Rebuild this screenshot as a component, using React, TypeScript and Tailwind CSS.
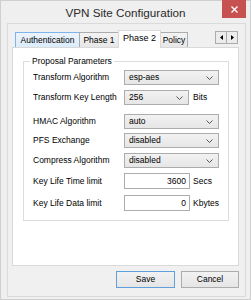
import React from 'react';

const Chevron = () => (
    <svg width="7" height="4" viewBox="0 0 7 4" className="mr-[5px] shrink-0">
        <path d="M0.5 0.5 L3.5 3.5 L6.5 0.5" fill="none" stroke="#555" strokeWidth="1" />
    </svg>
);

const Select = ({ value, width }: { value: string; width: string }) => (
    <div className={`${width} h-[15px] flex items-center justify-between border border-[#acacac] bg-gradient-to-b from-[#f2f2f2] to-[#e6e6e6]`}>
        <span className="pl-[4px] leading-none">{value}</span>
        <Chevron />
    </div>
);

const Row = ({ label, children, className }: { label: string; children: React.ReactNode; className: string }) => (
    <div className={`flex items-center ${className}`}>
        <span className="w-[91px] shrink-0 leading-none">{label}</span>
        {children}
    </div>
);

const Tab = ({ label, width, active }: { label: string; width: string; active?: boolean }) => {
    if (active) {
        return (
            <div className={`${width} h-[18px] -mb-px -ml-px relative z-10 border border-b-0 border-[#d9d9d9] bg-white flex items-start justify-center pt-[3px]`}>
                <span className="leading-none text-[9px]">{label}</span>
            </div>
        );
    }
    return (
        <div className={`${width} h-[15px] -ml-px border border-b-0 border-[#acacac] bg-gradient-to-b from-[#f3f3f3] to-[#e7e7e7] flex items-center justify-center`}>
            <span className="leading-none">{label}</span>
        </div>
    );
};

export default function App() {
    return (
        <div className="w-[251px] h-[300px] border border-[#cfcfcf] bg-[#efefef] flex flex-col text-[8.5px] text-black font-['Liberation_Sans',Arial,sans-serif]">
            {/* title bar */}
            <div className="h-[22px] grid grid-cols-[1fr_auto_1fr] items-start">
                <div />
                <div className="pt-[6px] text-[11.7px] leading-none text-[#2b2b2b]">VPN Site Configuration</div>
                <div className="justify-self-end mr-[4px] -mt-px w-[24px] h-[18px] bg-[#c75050] flex items-center justify-center">
                    <svg width="7" height="7" viewBox="0 0 7 7">
                        <path d="M0.5 0.5 L6.5 6.5 M6.5 0.5 L0.5 6.5" stroke="#fff" strokeWidth="1.4" />
                    </svg>
                </div>
            </div>

            {/* client area */}
            <div className="ml-[6px] mr-[4px] mb-[2px] flex-1 border border-[#dadada] bg-[#f0f0f0] flex flex-col pl-[4px] pr-[6px] pt-[6px]">
                {/* tabs */}
                <div className="h-[17px] flex items-end pl-[3px]">
                    <div className="w-[65px] h-[15px] border border-b-0 border-[#7eb4ea] bg-gradient-to-b from-[#ecf4fc] to-[#dcecfc] flex items-center justify-center">
                        <span className="leading-none">Authentication</span>
                    </div>
                    <Tab label="Phase 1" width="w-[40px]" />
                    <Tab label="Phase 2" width="w-[43px]" active />
                    <Tab label="Policy" width="w-[28px]" />
                    <div className="ml-auto mr-[1px] self-start mt-[1px] flex">
                        <div className="w-[12px] h-[13px] border border-[#acacac] bg-[#ececec] flex items-center justify-center">
                            <svg width="3" height="5" viewBox="0 0 3 5"><polygon points="3,0 3,5 0,2.5" fill="#000" /></svg>
                        </div>
                        <div className="w-[12px] h-[13px] -ml-px border border-[#acacac] bg-[#ececec] flex items-center justify-center">
                            <svg width="3" height="5" viewBox="0 0 3 5"><polygon points="0,0 0,5 3,2.5" fill="#000" /></svg>
                        </div>
                    </div>
                </div>

                {/* tab panel */}
                <div className="h-[219px] border border-[#d9d9d9] bg-white pt-[7px] pl-[10px] pr-[9px]">
                    <fieldset className="h-[166px] border border-[#dcdcdc] pl-[9px]">
                        <legend className="ml-[-3px] px-[2px] leading-[12px]">Proposal Parameters</legend>
                        <Row label="Transform Algorithm" className="mt-[3px]">
                            <Select value="esp-aes" width="w-[95px]" />
                        </Row>
                        <Row label="Transform Key Length" className="mt-[5px]">
                            <Select value="256" width="w-[65px]" />
                            <span className="ml-[4px] leading-none">Bits</span>
                        </Row>
                        <Row label="HMAC Algorithm" className="mt-[9px]">
                            <Select value="auto" width="w-[95px]" />
                        </Row>
                        <Row label="PFS Exchange" className="mt-[4px]">
                            <Select value="disabled" width="w-[95px]" />
                        </Row>
                        <Row label="Compress Algorithm" className="mt-[5px]">
                            <Select value="disabled" width="w-[95px]" />
                        </Row>
                        <Row label="Key Life Time limit" className="mt-[5px]">
                            <div className="w-[66px] h-[16px] border border-[#abadb3] bg-white flex items-center justify-end pr-[3px]">
                                <span className="leading-none">3600</span>
                            </div>
                            <span className="ml-[3px] leading-none">Secs</span>
                        </Row>
                        <Row label="Key Life Data limit" className="mt-[6px]">
                            <div className="w-[66px] h-[16px] border border-[#abadb3] bg-white flex items-center justify-end pr-[3px]">
                                <span className="leading-none">0</span>
                            </div>
                            <span className="ml-[3px] leading-none">Kbytes</span>
                        </Row>
                    </fieldset>
                </div>

                {/* buttons */}
                <div className="mt-[5px] flex justify-end gap-[6px]">
                    <div className="w-[59px] h-[17px] border border-[#5fa0dc] bg-gradient-to-b from-[#f2f2f2] to-[#e5e5e5] flex items-center justify-center">
                        <span className="leading-none">Save</span>
                    </div>
                    <div className="w-[58px] h-[17px] border border-[#acacac] bg-gradient-to-b from-[#f2f2f2] to-[#e5e5e5] flex items-center justify-center">
                        <span className="leading-none">Cancel</span>
                    </div>
                </div>
            </div>
        </div>
    );
}
